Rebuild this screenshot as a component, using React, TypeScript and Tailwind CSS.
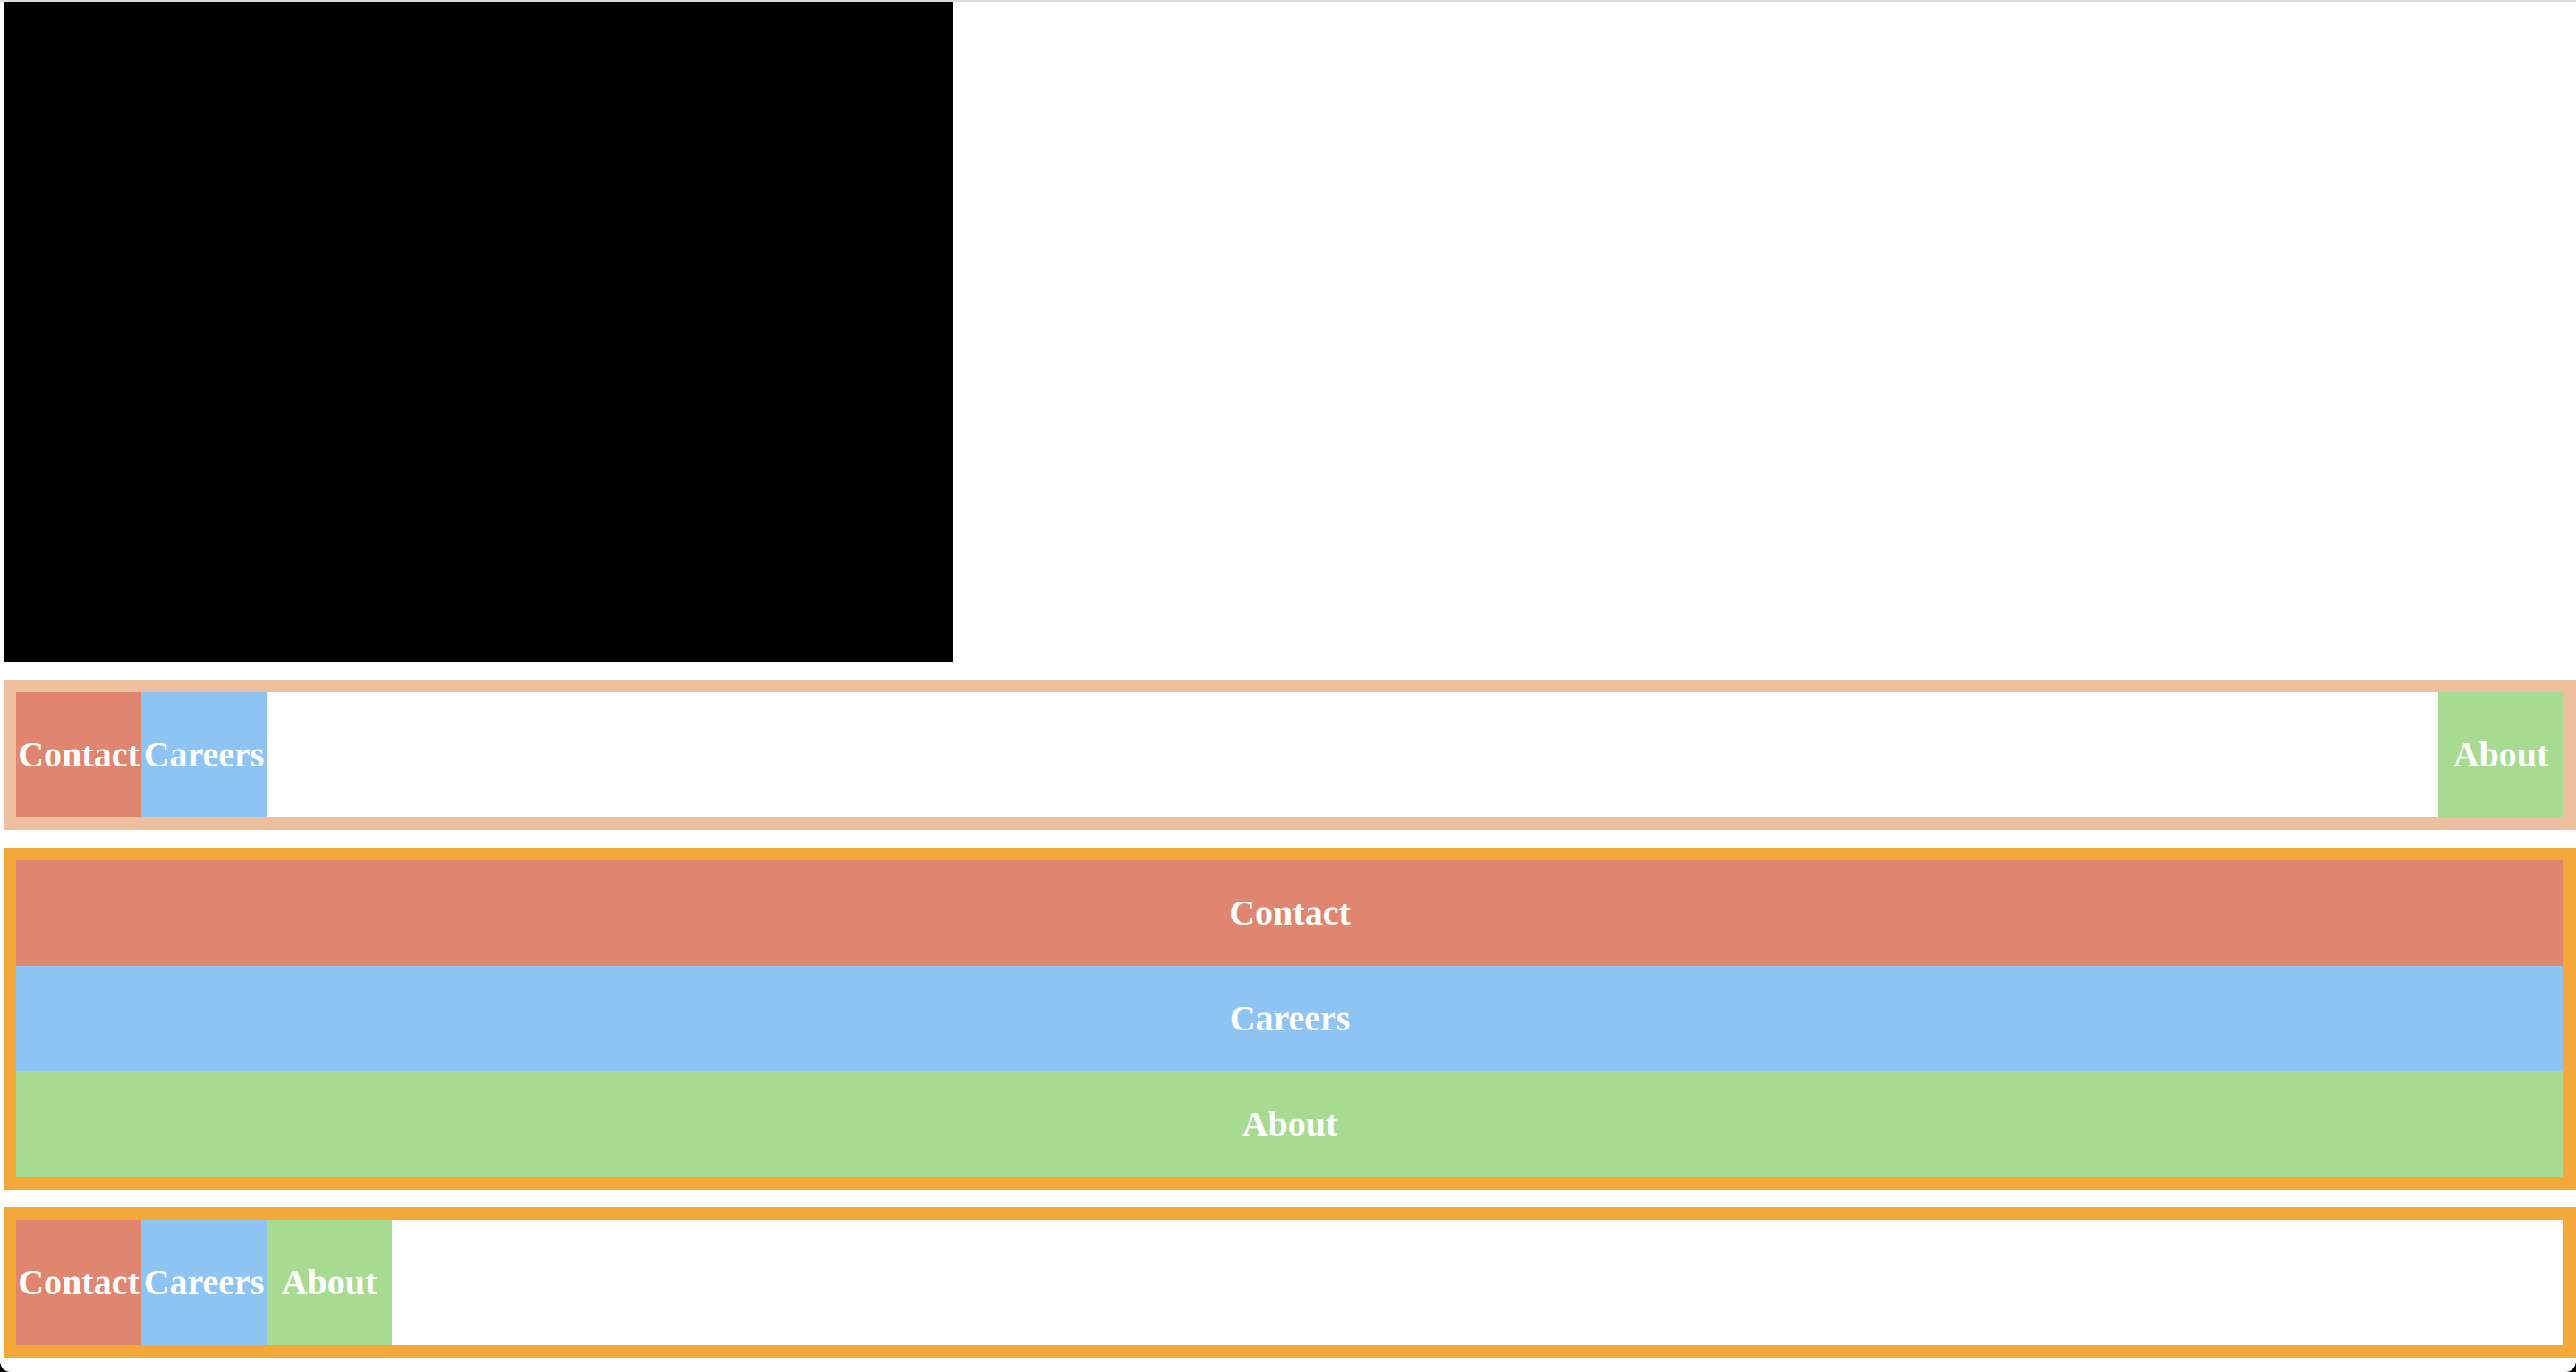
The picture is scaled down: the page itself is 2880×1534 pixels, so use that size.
import React from 'react';

type Item = { label: string; color: string };

const items: Item[] = [
  { label: 'Contact', color: 'bg-[#e08670]' },
  { label: 'Careers', color: 'bg-[#8ec4f3]' },
  { label: 'About', color: 'bg-[#a8db92]' },
];

const font = { fontFamily: '"Liberation Serif", "Times New Roman", serif' };

const Tile: React.FC<{ item: Item }> = ({ item }) => (
  <div className={`${item.color} w-[140px] h-[140px] flex items-center justify-center text-white font-bold text-[40px] leading-none`}>
    {item.label}
  </div>
);

const App: React.FC = () => {
  return (
    <div className="h-screen w-full bg-black overflow-hidden">
      <div className="h-full w-full bg-white rounded-b-[12px] border-t-2 border-[#dcdce0] pl-[4px] flex flex-col gap-[20px]" style={font}>
        {/* video area */}
        <div className="w-[1062px] h-[738px] bg-black shrink-0" />

        {/* nav with last item pushed right */}
        <nav className="border-[14px] border-[#edbf9f] flex shrink-0">
          <Tile item={items[0]} />
          <Tile item={items[1]} />
          <div className="ml-auto">
            <Tile item={items[2]} />
          </div>
        </nav>

        {/* stacked nav */}
        <nav className="border-[14px] border-[#f4a83a] flex flex-col shrink-0">
          {items.map((item) => (
            <div key={item.label} className={`${item.color} h-[118px] flex items-center justify-center text-white font-bold text-[40px] leading-none`}>
              {item.label}
            </div>
          ))}
        </nav>

        {/* left aligned nav */}
        <nav className="border-[14px] border-[#f4a83a] flex shrink-0">
          {items.map((item) => (
            <Tile key={item.label} item={item} />
          ))}
        </nav>
      </div>
    </div>
  );
};

export default App;
